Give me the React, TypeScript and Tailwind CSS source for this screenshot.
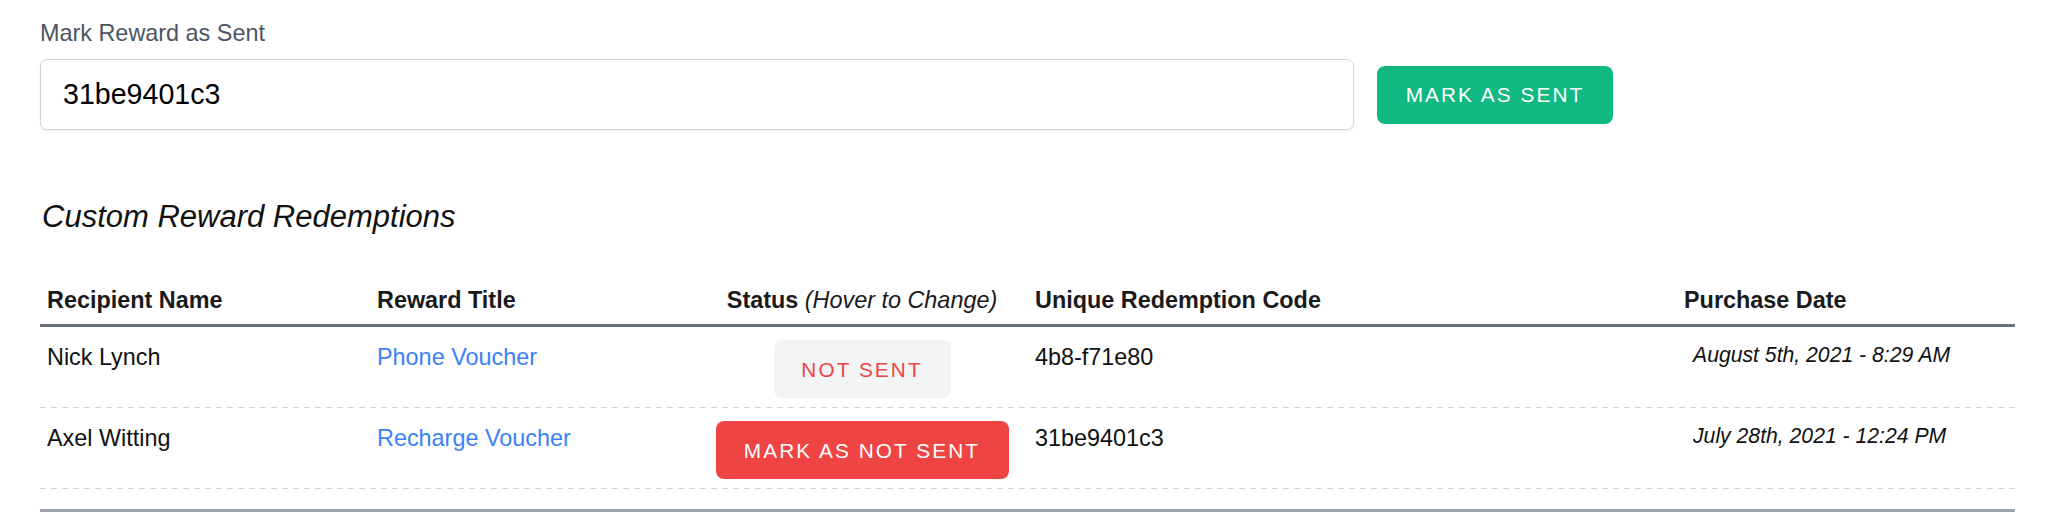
import React, { useState } from 'react';

type Redemption = {
  id: string;
  recipient: string;
  reward: string;
  code: string;
  purchased: string;
  sent: boolean;
  hovered?: boolean;
};

const REDEMPTIONS: Redemption[] = [
  {
    id: '1',
    recipient: 'Nick Lynch',
    reward: 'Phone Voucher',
    code: '4b8-f71e80',
    purchased: 'August 5th, 2021 - 8:29 AM',
    sent: false,
  },
  {
    id: '2',
    recipient: 'Axel Witting',
    reward: 'Recharge Voucher',
    code: '31be9401c3',
    purchased: 'July 28th, 2021 - 12:24 PM',
    sent: false,
    hovered: true,
  },
];

const COLS = 'grid grid-cols-[330px_327px_330px_650px_338px]';

const StatusButton = ({ item }: { item: Redemption }) => {
  // second row is shown in its hover state, like in the screenshot
  if (item.hovered) {
    return (
      <button className="h-[58px] w-[293px] rounded-[8px] bg-[#ef4444] text-white text-[20.8px] tracking-[0.1em] uppercase">
        Mark as not sent
      </button>
    );
  }
  return (
    <button className="h-[58px] w-[177px] rounded-[8px] bg-[#f3f4f6] text-[#ef4444] text-[20.8px] tracking-[0.1em] uppercase">
      Not sent
    </button>
  );
};

const App = () => {
  const [code, setCode] = useState('31be9401c3');

  return (
    <div className="w-[2048px] h-[514px] overflow-hidden bg-white pl-[40px] pt-[16px] font-['Liberation_Sans',Arial,sans-serif] text-[#111111]">
      {/* Mark as sent */}
      <label className="block text-[23.4px] leading-[35px] text-[#4b5563]">Mark Reward as Sent</label>
      <div className="mt-[8px] flex items-center gap-[23px]">
        <input
          value={code}
          onChange={e => setCode(e.target.value)}
          className="w-[1314px] h-[71px] rounded-[7px] border border-[#d1d5db] pl-[22px] text-[28.6px] text-black shadow-[0_1px_2px_rgba(0,0,0,0.08)] outline-none"
        />
        <button className="h-[58px] w-[236px] rounded-[8px] bg-[#10b981] text-white text-[20.8px] tracking-[0.1em] uppercase">
          Mark as Sent
        </button>
      </div>

      {/* Redemptions */}
      <h2 className="mt-[65px] pl-[2px] text-[31px] leading-[44px] italic font-light text-[#111111]">
        Custom Reward Redemptions
      </h2>

      <div className="w-[1975px]">
        <div className={`${COLS} h-[88px] items-end pb-[6px] border-b-[3px] border-[#6b7280] text-[23.4px] leading-[35px] font-semibold text-[#1a1a1a]`}>
          <div className="pl-[7px]">Recipient Name</div>
          <div className="pl-[7px]">Reward Title</div>
          <div className="text-center">
            Status <span className="italic font-normal">(Hover to Change)</span>
          </div>
          <div className="pl-[8px]">Unique Redemption Code</div>
          <div className="pl-[7px]">Purchase Date</div>
        </div>

        {REDEMPTIONS.map(item => (
          <div key={item.id}>
            <div className={`${COLS} h-[80px] items-start pt-[13px] text-[23.4px] leading-[35px]`}>
              <div className="pl-[7px]">{item.recipient}</div>
              <div className="pl-[7px] text-[#3b82f6]">{item.reward}</div>
              <div className="flex justify-center">
                <StatusButton item={item} />
              </div>
              <div className="pl-[8px]">{item.code}</div>
              <div className="pl-[16px] text-[21.2px] leading-[30px] italic">{item.purchased}</div>
            </div>
            {/* dashed row divider */}
            <div className="h-[1px] bg-[repeating-linear-gradient(90deg,#d1d5db_0px,#d1d5db_6px,transparent_6px,transparent_11px)]" />
          </div>
        ))}

        <div className="h-[23px] border-b-[3px] border-[#9ca3af]" />
      </div>
    </div>
  );
};

export default App;
